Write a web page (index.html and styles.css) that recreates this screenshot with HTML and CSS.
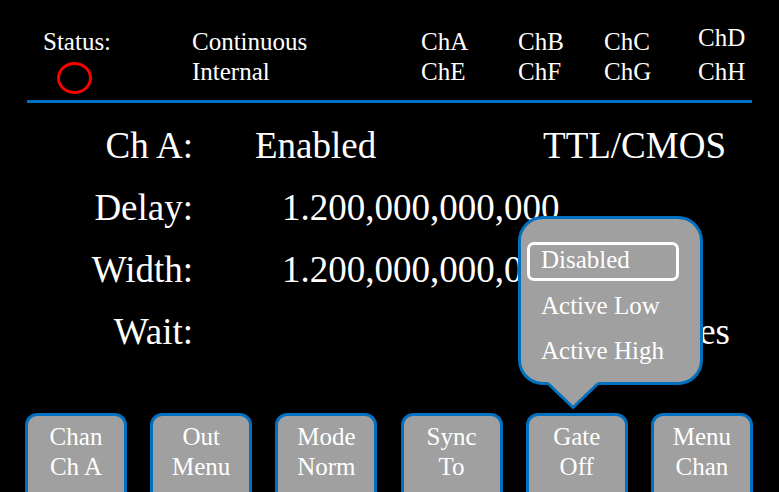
FILE: index.html
```html
<!DOCTYPE html>
<html>
<head>
<meta charset="utf-8">
<link rel="stylesheet" href="styles.css">
</head>
<body>
<div class="screen">
  <header class="status">
    <div>Status:</div>
    <div>Continuous</div>
    <div>ChA</div>
    <div>ChB</div>
    <div>ChC</div>
    <div class="raised">ChD</div>
    <div><div class="led"></div></div>
    <div>Internal</div>
    <div>ChE</div>
    <div>ChF</div>
    <div>ChG</div>
    <div>ChH</div>
  </header>
  <div class="rule"></div>
  <main class="params">
    <div class="row">
      <span class="label">Ch A:</span>
      <span class="val-enabled">Enabled</span>
      <span class="val-right">TTL/CMOS</span>
    </div>
    <div class="row">
      <span class="label">Delay:</span>
      <span class="val-num">1.200,000,000,000</span>
    </div>
    <div class="row">
      <span class="label">Width:</span>
      <span class="val-num">1.200,000,000,000</span>
    </div>
    <div class="row">
      <span class="label">Wait:</span>
      <span class="val-wait">0 Pulses</span>
    </div>
  </main>
  <nav class="softkeys">
    <div class="key">Chan<br>Ch A</div>
    <div class="key">Out<br>Menu</div>
    <div class="key">Mode<br>Norm</div>
    <div class="key">Sync<br>To</div>
    <div class="key">Gate<br>Off</div>
    <div class="key">Menu<br>Chan</div>
  </nav>
  <div class="popup">
    <div class="opt selected">Disabled</div>
    <div class="opt">Active Low</div>
    <div class="opt">Active High</div>
  </div>
  <svg class="pointer" width="60" height="32" viewBox="0 0 60 32">
    <polygon points="5,0 55,0 55,3.5 30,27.5 5,3.5" fill="#a0a0a0"/>
    <polyline points="5,3.5 30,27.5 55,3.5" fill="none" stroke="#0070c0" stroke-width="3"/>
  </svg>
</div>
</body>
</html>
```
FILE: styles.css
```css
html, body {
  margin: 0;
  padding: 0;
  background: #000;
}
.screen {
  position: relative;
  width: 779px;
  height: 492px;
  overflow: hidden;
  background: #000;
  color: #fff;
  font-family: "Liberation Serif", "Times New Roman", serif;
}
.status {
  display: grid;
  grid-template-columns: 149px 229px 97px 86px 94px auto;
  grid-template-rows: 30px 30px;
  padding: 27px 0 0 43px;
  font-size: 25px;
  line-height: 30px;
}
.raised {
  margin-top: -4px;
}
.led {
  box-sizing: border-box;
  width: 35px;
  height: 32px;
  margin: 5px 0 0 14px;
  border: 3px solid #ff0000;
  border-radius: 50%;
}
.rule {
  width: 725px;
  height: 3px;
  margin: 13px 0 0 27px;
  background: #0070c0;
}
.params {
  padding-top: 11.5px;
  font-size: 37px;
  line-height: 62px;
}
.row {
  display: flex;
  height: 62px;
  white-space: nowrap;
}
.label {
  width: 193px;
  text-align: right;
  flex: none;
}
.val-enabled {
  margin-left: 62px;
}
.val-right {
  margin-left: auto;
  margin-right: 53px;
}
.val-num {
  margin-left: 89px;
}
.val-wait {
  margin-left: auto;
  margin-right: 49px;
}
.softkeys {
  display: flex;
  gap: 23.2px;
  margin: 50.5px 0 0 25px;
}
.key {
  box-sizing: border-box;
  width: 102px;
  height: 95px;
  flex: none;
  padding-top: 5.6px;
  border: 3px solid #0070c0;
  border-radius: 12px;
  background: #a0a0a0;
  font-size: 25px;
  line-height: 30px;
  text-align: center;
}
.popup {
  position: absolute;
  left: 518px;
  top: 216px;
  box-sizing: border-box;
  width: 185px;
  height: 169px;
  padding: 23px 0 0 6px;
  border: 3px solid #0070c0;
  border-radius: 25px;
  background: #a0a0a0;
  font-size: 25px;
}
.opt {
  padding-left: 14px;
  line-height: 45px;
  white-space: nowrap;
}
.opt.selected {
  box-sizing: border-box;
  width: 152px;
  height: 39px;
  padding: 0 0 4px 11px;
  margin-bottom: 2px;
  border: 3px solid #fff;
  border-radius: 7px;
  line-height: 29px;
}
.pointer {
  position: absolute;
  left: 543px;
  top: 380px;
}
```
